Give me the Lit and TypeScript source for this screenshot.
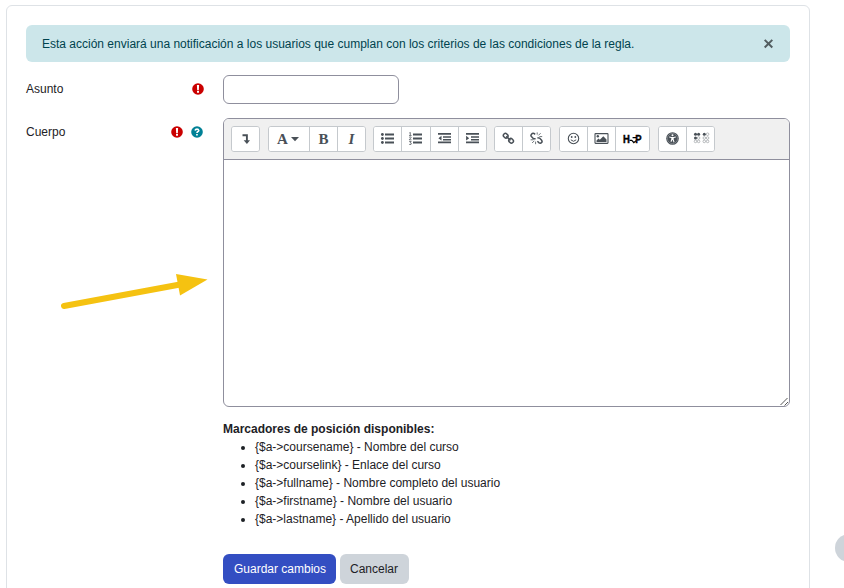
import { LitElement, html, css, svg, TemplateResult } from "lit";
import { customElement } from "lit/decorators.js";

const icon = (body: unknown, w = 15) =>
  html`<svg class="icon" width=${w} height="14" viewBox="0 0 ${w} 14" aria-hidden="true">${body}</svg>`;

const ICONS = {
  toggle: svg`<path d="M4.5 3.2H8.9V9" fill="none" stroke="currentColor" stroke-width="1.9"/><path d="M5.7 8.2H12L8.9 12z"/>`,
  caret: svg`<path d="M0 5h8L4 9.2z"/>`,
  ul: svg`<circle cx="2.4" cy="2.5" r="1.4"/><circle cx="2.4" cy="6.5" r="1.4"/><circle cx="2.4" cy="10.5" r="1.4"/><path d="M5 1.6h9v1.8H5zM5 5.6h9v1.8H5zM5 9.6h9v1.8H5z"/>`,
  ol: svg`<path d="M5 1.6h9v1.8H5zM5 5.6h9v1.8H5zM5 9.6h9v1.8H5z"/><path d="M1.3 1l1-.6v3M1 3.6h2.6M1.2 5.3q2-.9 1.9.3L1.2 7.8h2.3M1.2 9.5h2L2.2 10.7q2 .2.7 1.8l-1.7-.1" fill="none" stroke="currentColor" stroke-width=".75"/>`,
  outdent: svg`<path d="M1 1.1h13v1.6H1zM6 4.2h8v1.5H6zM6 6.9h8v1.5H6zM1 9.6h13v1.6H1zM4.5 3.8v4.8L1.4 6.2z"/>`,
  indent: svg`<path d="M1 1.1h13v1.6H1zM6 4.2h8v1.5H6zM6 6.9h8v1.5H6zM1 9.6h13v1.6H1zM1.1 3.8v4.8l3.1-2.4z"/>`,
  link: svg`<g fill="none" stroke="currentColor" stroke-width="1.5"><rect x="2.3" y="1.7" width="4.8" height="4" rx="1.9" transform="rotate(45 4.7 3.7)"/><rect x="7.7" y="6.8" width="4.8" height="4" rx="1.9" transform="rotate(45 10.1 8.8)"/><path d="M5.2 4.2l4.3 4.2"/></g>`,
  unlink: svg`<g fill="none" stroke="currentColor" stroke-width="1.5"><path d="M6.2 2.4L5 1.5Q3.6.9 2.5 2.2T2.4 4.6L4.5 6.7L6.6 6.8M8.4 5.7L10.6 6.1l2 2.1q1 1.4-.1 2.4t-2.4.2L8.4 9.2"/><path stroke-width=".8" d="M8.2.4v2.2M9.4 3.4L11.6 1.2M10.4 4.6h2.8M1.6 7.8h2.8M5.3 8.8l-2.2 2.2M6.6 9.6v2.6"/></g>`,
  smile: svg`<circle cx="7.5" cy="6.5" r="5.2" fill="none" stroke="currentColor" stroke-width="1.1"/><circle cx="5.7" cy="5" r=".9"/><circle cx="9.3" cy="5" r=".9"/><path d="M4.8 7.8q2.7 3 5.4 0" fill="none" stroke="currentColor"/>`,
  image: svg`<rect x="2" y="1.6" width="13" height="9.8" rx=".6" fill="none" stroke="currentColor" stroke-width="1.1"/><circle cx="4.8" cy="4.3" r="1.2"/><path d="M3.5 10V8.4l2-2 1.3 1.3 3.500-3.500L13.500 7.4V10z"/>`,
  access: svg`<circle cx="7.5" cy="6.5" r="6.3"/><circle cx="7.5" cy="6.5" r="5.1" fill="none" stroke="#fff" stroke-width=".5" opacity=".5"/><circle cx="7.5" cy="3.3" r="1" fill="#fff"/><path d="M4.2 4.5l2.100.6h2.400l2.100-.6v.9l-2.100.7v1.500l.8 2.500-.9.3-.9-2.400h-.4L6.400 9.900l-.9-.3.800-2.500V6.100l-2.100-.7z" fill="#fff"/>`,
};

const braille = () => {
  const xs = [2.5, 5.6, 11.3, 14.6];
  const ys = [2.2, 6, 9.4];
  const filled = ["0,0", "1,0", "2,0", "0,1"];
  return xs.flatMap((x, i) =>
    ys.map((y, j) =>
      filled.includes(`${i},${j}`)
        ? svg`<circle cx=${x} cy=${y} r="1.5"/>`
        : svg`<circle cx=${x} cy=${y} r="1.3" fill="none" stroke="currentColor" stroke-width=".45" opacity=".8"/>`
    )
  );
};

const required = html`<svg class="mark required" width="12" height="12" viewBox="0 0 12 12" role="img" aria-label="Obligatorio">
  <circle cx="6" cy="6" r="5.8" /><path fill="#fff" d="M4.9 2h2.2l-.25 4.9h-1.7zM5 7.8h2v1.9H5z" />
</svg>`;
const help = html`<svg class="mark help" width="12" height="12" viewBox="0 0 12 12" role="img" aria-label="Ayuda">
  <circle cx="6" cy="6" r="5.8" /><path d="M4 4.5Q4.5 3.1 6 3.1T7.8 4.6Q7.6 5.5 6.7 5.8 6 6.2 6 7.1" fill="none" stroke="#fff" stroke-width="1.6" /><path fill="#fff" d="M5.1 8h1.7v1.6H5.1z" />
</svg>`;

interface Tool {
  label: string;
  content: TemplateResult;
  size?: string;
}

interface Group {
  name: string;
  tools: Tool[];
}

const GROUPS: Group[] = [
  { name: "collapse", tools: [{ label: "Mostrar más botones", content: icon(ICONS.toggle) }] },
  {
    name: "style",
    tools: [
      { label: "Estilos de párrafo", content: html`<b class="glyph">A</b>${icon(ICONS.caret, 8)}`, size: "styles" },
      { label: "Negrita", content: html`<b class="glyph">B</b>` },
      { label: "Cursiva", content: html`<b class="glyph italic">I</b>` },
    ],
  },
  {
    name: "lists",
    tools: [
      { label: "Lista desordenada", content: icon(ICONS.ul) },
      { label: "Lista ordenada", content: icon(ICONS.ol) },
      { label: "Reducir sangría", content: icon(ICONS.outdent) },
      { label: "Aumentar sangría", content: icon(ICONS.indent) },
    ],
  },
  {
    name: "links",
    tools: [
      { label: "Enlace", content: icon(ICONS.link) },
      { label: "Quitar enlace", content: icon(ICONS.unlink) },
    ],
  },
  {
    name: "media",
    tools: [
      { label: "Emoticono", content: icon(ICONS.smile) },
      { label: "Imagen", content: icon(ICONS.image, 16) },
      {
        label: "H5P",
        size: "wide",
        content: html`<span class="h5p">H<svg width="8" height="11" viewBox="0 0 8 11"><path d="M0 6.3H3M3.6 3.600H8M3 6.500L5 8.700 7.300 6.800" fill="none" stroke="#000" stroke-width="1.3" /></svg>P</span>`,
      },
    ],
  },
  {
    name: "access",
    tools: [
      { label: "Comprobador de accesibilidad", content: icon(ICONS.access) },
      { label: "Ayuda para lector de pantalla", content: icon(braille(), 18) },
    ],
  },
];

const PLACEHOLDERS = [
  "{$a->coursename} - Nombre del curso",
  "{$a->courselink} - Enlace del curso",
  "{$a->fullname} - Nombre completo del usuario",
  "{$a->firstname} - Nombre del usuario",
  "{$a->lastname} - Apellido del usuario",
];

@customElement("editor-box")
export class EditorBox extends LitElement {
  static styles = css`
    :host { display: flex; flex-direction: column; box-sizing: border-box; height: 289px; border: 1px solid #8f8f9d; border-radius: 6px; overflow: hidden; background: #fff; }
    .toolbar { display: flex; gap: 7px; box-sizing: border-box; height: 41px; padding: 7px; background: #f0f0f0; border-bottom: 1px solid #8f8f9d; }
    .group { display: flex; box-sizing: border-box; height: 26px; border: 1px solid #c5c9cd; border-radius: 3px; background: #fff; overflow: hidden; }
    .style, .media, .access { margin-left: 1px; }
    .tool { display: flex; align-items: center; justify-content: center; box-sizing: border-box; width: 28px; padding: 0; border: 0; border-right: 1px solid #c5c9cd; background: #fff; color: #495057; }
    .lists .tool { width: 28.3px; }
    .tool:last-child, .lists .tool:last-child { border-right: 0; width: 27px; }
    .access .tool:last-child { padding-left: 3px; }
    .tool.styles { width: 41px; gap: 3px; padding-right: 2px; }
    .tool.wide:last-child { width: 33px; }
    .icon { display: block; flex: none; fill: currentColor; }
    .glyph { font: bold 15px/16px "Liberation Serif", serif; }
    .italic { font-style: italic; }
    .h5p { display: flex; align-items: center; color: #000; font: bold 10.5px/12px "Liberation Sans", sans-serif; -webkit-text-stroke: 0.4px #000; transform: scaleX(0.9); }
    .h5p svg { flex: none; margin: 0 -1px; }
    .area { display: flex; flex: 1; align-items: flex-end; justify-content: flex-end; }
    .grip { display: block; }
  `;

  render() {
    return html`
      <div class="toolbar">
        ${GROUPS.map(
          (group) => html`<div class="group ${group.name}">
            ${group.tools.map((t) => html`<button class="tool ${t.size ?? ""}" aria-label=${t.label}>${t.content}</button>`)}
          </div>`
        )}
      </div>
      <div class="area">
        <svg class="grip" width="9" height="9" viewBox="0 0 9 9"><path d="M.5 8L7.5 1M4.5 8.5L8 5" fill="none" stroke="#444" stroke-width=".9" /></svg>
      </div>
    `;
  }
}

@customElement("app-root")
export class AppRoot extends LitElement {
  static styles = css`
    :host { display: block; position: relative; box-sizing: border-box; height: 588px; padding: 5px 34px 0 6px; overflow: hidden; background: #fff; color: #1d2125; font: 12px/18px "Liberation Sans", Arial, sans-serif; }
    .panel { box-sizing: border-box; height: 600px; padding: 19px; border: 1px solid #dee2e6; border-radius: 6px; }
    .alert { display: flex; align-items: center; justify-content: space-between; box-sizing: border-box; height: 37px; padding: 0 16px; border-radius: 6px; background: #cce6ea; color: #00434e; }
    .close { display: block; }
    .row { display: grid; grid-template-columns: 197px 1fr; }
    .subject { margin-top: 13px; }
    .body { margin-top: 14px; }
    .label { display: flex; align-items: center; height: 18px; padding: 5px 18.7px 0 0; }
    .body .label { padding-right: 19.7px; }
    .label span { flex: 1; }
    .body .help { margin-left: 8.3px; }
    .mark { display: block; }
    .required { fill: #ca0000; }
    .help { fill: #008196; }
    .input { box-sizing: border-box; width: 176px; height: 29px; border: 1px solid #8f8f9d; border-radius: 6px; background: #fff; }
    .hint { margin-top: 13px; }
    .list { margin: 0; padding-left: 32px; }
    .actions { display: flex; gap: 4px; margin-top: 26px; }
    .btn { height: 30px; padding: 0; border: 0; border-radius: 6px; font: inherit; }
    .save { width: 113px; padding-left: 1px; background: #334ec2; color: #fff; }
    .cancel { width: 69px; padding-right: 1px; background: #ced4da; color: #1d2125; }
    .arrow { position: absolute; left: 56px; top: 268px; }
    .bubble { position: absolute; left: 835px; top: 534px; width: 28px; height: 28px; border-radius: 50%; background: #ced4da; }
  `;

  render() {
    return html`
      <main class="panel">
        <div class="alert">
          <span>Esta acción enviará una notificación a los usuarios que cumplan con los criterios de las condiciones de la regla.</span>
          <svg class="close" width="11" height="11" viewBox="0 0 11 11"><path d="M1.7 1.9l7.6 7.6M9.3 1.9L1.7 9.5" stroke="#525d60" stroke-width="2" /></svg>
        </div>
        <div class="row subject">
          <div class="label"><span>Asunto</span>${required}</div>
          <input class="input" aria-label="Asunto" />
        </div>
        <div class="row body">
          <div class="label"><span>Cuerpo</span>${required}${help}</div>
          <div>
            <editor-box></editor-box>
            <div class="hint"><b>Marcadores de posición disponibles:</b></div>
            <ul class="list">${PLACEHOLDERS.map((p) => html`<li>${p}</li>`)}</ul>
            <div class="actions">
              <button class="btn save">Guardar cambios</button>
              <button class="btn cancel">Cancelar</button>
            </div>
          </div>
        </div>
      </main>
      <svg class="arrow" width="156" height="44" viewBox="0 0 156 44">
        <path d="M8 38L124 16.5" stroke="#f5c211" stroke-width="6" stroke-linecap="round" />
        <path d="M120 6L151.5 11.5L124 27.5z" fill="#f5c211" />
      </svg>
      <div class="bubble"></div>
    `;
  }
}
